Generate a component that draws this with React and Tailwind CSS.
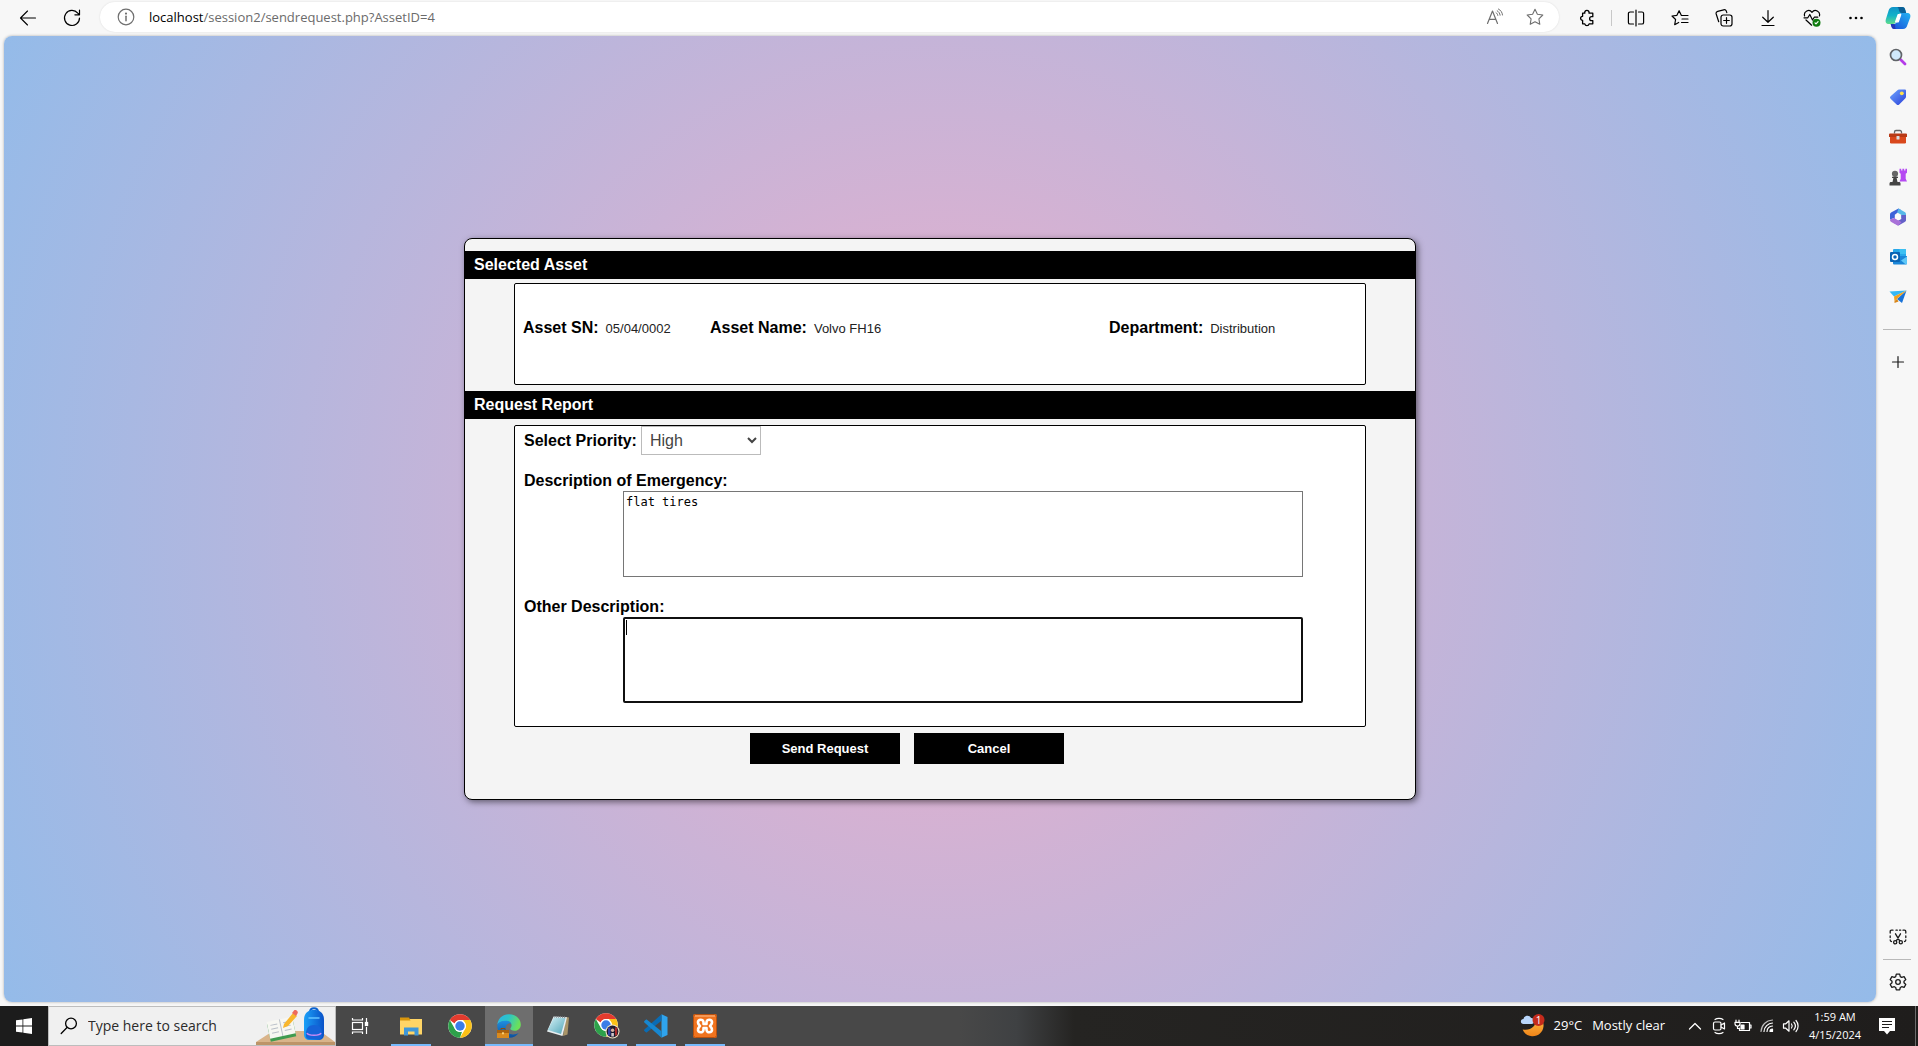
import React from "react";

const stroke = {
  fill: "none",
  stroke: "currentColor",
  strokeLinecap: "round",
  strokeLinejoin: "round",
};

/* ---------- Browser toolbar icons ---------- */

const BackIcon = () => (
  <svg width="18" height="18" viewBox="0 0 18 18" {...stroke} strokeWidth="1.1">
    <path d="M16.5 9H1.800M8.500 2 1.500 9l7 7" />
  </svg>
);

const ReloadIcon = () => (
  <svg width="18" height="18" viewBox="0 0 18 18" {...stroke} strokeWidth="1.2">
    <path d="M16.500 9A7.500 7.500 0 1 1 14.800 4.200L16.300 5.800M16.500 1.200v4.600h-4.600" />
  </svg>
);

const InfoIcon = () => (
  <svg width="18" height="18" viewBox="0 0 18 18" {...stroke} strokeWidth="1.2">
    <circle cx="9" cy="9" r="7.8" />
    <path d="M9 8.200v4.600" strokeWidth="1.5" />
    <circle cx="9" cy="5.6" r="0.5" fill="currentColor" />
  </svg>
);

const ReadAloudIcon = () => (
  <svg width="18" height="18" viewBox="0 0 18 18" {...stroke} strokeWidth="1.2">
    <path d="M1.500 15.500 6.500 3l5 12.500M3.200 11.300h6.600" />
    <path d="M10 4.600c1 .7 1.600 1.600 1.800 2.800M11.200 2.800c1.700 1 2.600 2.400 2.900 4.400M12.400 1c2.500 1.300 3.800 3.300 4.100 6" strokeWidth="1" />
  </svg>
);

const StarIcon = () => (
  <svg width="18" height="18" viewBox="0 0 18 18" {...stroke} strokeWidth="1.1">
    <path d="m9 1.300 2.400 5 5.400.7-3.900 3.800.9 5.500L9 13.700l-4.800 2.600.9-5.500L1.200 7l5.400-.7z" />
  </svg>
);

const PuzzleIcon = () => (
  <svg width="18" height="18" viewBox="0 0 18 18" {...stroke} strokeWidth="1.3">
    <path d="M4.600 4.200h2.200a2.200 2.200 0 1 1 4.200 0h3.800v3.500h-1.200a1.900 1.900 0 1 0 0 3.900h1.200v3.200h-3.700a2.200 2.200 0 0 1-4.300 0H4.600v-3.500a2 2 0 1 1 0-4z" />
  </svg>
);

const SplitIcon = () => (
  <svg width="18" height="18" viewBox="0 0 18 18" {...stroke} strokeWidth="1.2">
    <path d="M6.500 3H3a1.600 1.600 0 0 0-1.600 1.600v8.800A1.600 1.600 0 0 0 3 15h3.500M11.500 3H15a1.600 1.600 0 0 1 1.600 1.600v8.800A1.600 1.600 0 0 1 15 15h-3.500M9 1v16" />
  </svg>
);

const FavoritesIcon = () => (
  <svg width="18" height="18" viewBox="0 0 18 18" {...stroke} strokeWidth="1.2">
    <path d="M17 6.500h-6.600L8.100 1.700 5.900 6.300 1 7l3.600 3.500-.9 5.200 4-2.200" />
    <path d="M11 10h6M10.500 13.500H17" />
  </svg>
);

const CollectionsIcon = () => (
  <svg width="18" height="18" viewBox="0 0 18 18" {...stroke} strokeWidth="1.2">
    <rect x="6" y="6" width="11" height="11" rx="2.2" />
    <path d="M11.500 8.700v5.600M8.700 11.500h5.600M3.700 12.700 1.200 5a2.200 2.200 0 0 1 1.500-2.700l6-1.500a2.200 2.200 0 0 1 2.600 1.300l.5 1.500" />
  </svg>
);

const DownloadIcon = () => (
  <svg width="18" height="18" viewBox="0 0 18 18" {...stroke} strokeWidth="1.2">
    <path d="M9 1.500v11.500M3.700 8.200 9 13.300l5.300-5.100M3 16.500h12" />
  </svg>
);

const HealthIcon = () => (
  <svg width="18" height="18" viewBox="0 0 18 18" {...stroke} strokeWidth="1.2">
    <path d="M1.600 7A4.200 4.200 0 0 1 9 3.300 4.200 4.200 0 0 1 16.400 7M1 8.800h3.800l2-3.300L9.500 11l1.800-2.800h3.500M3 11l5.600 5.200" />
    <circle cx="13.5" cy="13.7" r="4" fill="#0f7b0f" stroke="none" />
    <path d="m12 13.900 1 1 2.100-2.300" stroke="#fff" />
  </svg>
);

const MoreIcon = () => (
  <svg width="18" height="18" viewBox="0 0 18 18" fill="currentColor">
    <circle cx="3.5" cy="9" r="1.3" />
    <circle cx="9" cy="9" r="1.3" />
    <circle cx="14.5" cy="9" r="1.3" />
  </svg>
);

const CopilotIcon = () => (
  <svg width="26" height="24" viewBox="0 0 26 24">
    <defs>
      <linearGradient id="cpA" x1="0" y1="0" x2="0" y2="1">
        <stop offset="0" stopColor="#1093c8" />
        <stop offset=".5" stopColor="#12b2c8" />
        <stop offset="1" stopColor="#5fdc8c" />
      </linearGradient>
      <linearGradient id="cpB" x1="0" y1="1" x2="1" y2="0">
        <stop offset="0" stopColor="#1b49d8" />
        <stop offset="1" stopColor="#22b4f2" />
      </linearGradient>
    </defs>
    <path d="M8 1h9c2.200 0 2.800 1.200 3.300 3l.9 3H17c-2 0-3 .8-3.600 2.600L11.500 15c-.8 2.200-1.800 3-3.800 3H4C1 18 .1 16 .8 13.500l2.800-9C4.300 2.200 5.700 1 8 1z" fill="url(#cpA)" />
    <path d="M12 1h5c2.200 0 2.800 1.200 3.300 3l.9 3H17c-1.600 0-2.400-.8-2.800-2.200C13.600 2.300 13.300 1.300 12 1z" fill="#0a5f96" />
    <path d="M18 23H9.500c-2 0-2.700-1.200-3.200-3l-.6-2H8c2 0 3.200-.8 3.800-2.600L14.500 9c.6-1.500 1.500-2 3-2H22c3 0 3.900 2 3.200 4.500l-2.800 7.500C21.700 21.800 20.300 23 18 23z" fill="url(#cpB)" />
    <path d="M6.300 20 5.700 18H8c1.500 0 2.500.8 2.200 2.500-.2 1.500.3 2.300 1.300 2.500h-2c-2 0-2.700-1.200-3.200-3z" fill="#2136b8" />
    <path d="M13.200 8.500h2.600l-2.500 7.300h-2.700z" fill="#fff" stroke="#fff" strokeWidth="1.200" strokeLinejoin="round" />
  </svg>
);

/* ---------- Sidebar icons ---------- */

const SideSearch = () => (
  <svg width="18" height="18" viewBox="0 0 18 18" fill="none">
    <path d="m11 11 5 5" stroke="#b43be8" strokeWidth="2.8" strokeLinecap="round" />
    <circle cx="7" cy="7" r="5.5" fill="#cfe9fb" stroke="#606468" strokeWidth="1.7" />
  </svg>
);

const SideTag = () => (
  <svg width="18" height="18" viewBox="0 0 18 18">
    <defs>
      <linearGradient id="tag" x1="0" y1="0" x2="1" y2="1">
        <stop offset="0" stopColor="#6ea6ff" />
        <stop offset="1" stopColor="#2a3fd8" />
      </linearGradient>
    </defs>
    <path d="M10 1.500h6a1 1 0 0 1 1 1v6.300a2 2 0 0 1-.6 1.400l-6.200 6.200a1.800 1.800 0 0 1-2.600 0L1.600 10.800a1.800 1.800 0 0 1 0-2.600l6.800-6A2.400 2.400 0 0 1 10 1.500z" fill="url(#tag)" />
    <circle cx="12.8" cy="5.3" r="1.9" fill="#ffe04a" />
  </svg>
);

const SideToolbox = () => (
  <svg width="18" height="16" viewBox="0 0 18 16">
    <path d="M5.500 4.500V3A1.500 1.500 0 0 1 7 1.500h4A1.500 1.500 0 0 1 12.500 3v1.500" fill="none" stroke="#666" strokeWidth="1.3" />
    <rect x="1" y="7" width="16" height="7.5" rx="1.2" fill="#d9481c" />
    <path d="M1 4.500h16a1 1 0 0 1 1 1V8H0V5.500a1 1 0 0 1 1-1z" fill="#b93a16" />
    <rect x="7.5" y="7" width="3" height="3.5" rx=".6" fill="#d8dde2" />
  </svg>
);

const SideChess = () => (
  <svg width="18" height="18" viewBox="0 0 18 18">
    <path d="M10.500.8h1.700v1.600h1.200V.8h1.800v1.600h1.200V.8H18v4l-1.300 1v5L18 13.500h-7.500l1.200-2.700v-5l-1.200-1z" fill="#b54af2" />
    <circle cx="6" cy="5.8" r="3.1" fill="#666" />
    <path d="M3 8.700h6v1.300H7.600l.9 4H10c1 0 1.500.7 1.500 1.700V17.500H.5v-1.800C.5 14.700 1 14 2 14h1.500l.9-4H3z" fill="#444" />
  </svg>
);

const SideOffice = () => (
  <svg width="18" height="18" viewBox="0 0 18 18">
    <path d="M9.500.5 2.500 4.300C1.400 5 1 5.600 1 7v4.500l4.800-1.700V6.800L12 2z" fill="#3d62d8" />
    <path d="M9.500.5 15.700 4C16.700 4.600 17 5.200 17 6.500v6L12.300 10V6.700L8.200 4.500z" fill="#58b8e8" />
    <path d="M17 7v5c0 1-.4 1.500-1.300 2L9.500 17.500 5 15l7.300-4V7z" fill="#6460c8" />
    <path d="M1 11.500c0 1.300.3 1.800 1.300 2.400L9 17.700l3.500-3.500L5.800 9.700z" fill="#a871d8" />
    <path d="m9 5.900 3 1.700v3L9 12.300l-3-1.700v-3z" fill="#fafafa" />
  </svg>
);

const SideOutlook = () => (
  <svg width="18" height="18" viewBox="0 0 18 18">
    <rect x="4" y="1" width="13" height="8" rx="1" fill="#28a8ea" />
    <path d="M10.500 1H16a1 1 0 0 1 1 1v4h-6.500z" fill="#3cc0f2" />
    <path d="M4 8h14v7.500a1 1 0 0 1-1 1H5a1 1 0 0 1-1-1z" fill="#1a86d8" />
    <path d="m18 8.500-6 4 4.800 4c.8 0 1.200-.5 1.200-1.200z" fill="#5fc8f8" />
    <rect x="1" y="4" width="10" height="10" rx="1" fill="#0a64b4" />
    <circle cx="6" cy="9" r="2.5" fill="none" stroke="#fff" strokeWidth="1.5" />
  </svg>
);

const SideSend = () => (
  <svg width="18" height="16" viewBox="0 0 18 16">
    <path d="M.5 2.500 17.500 1.500 5 7.500z" fill="#35b8f5" />
    <path d="M17.500 1.500 13 14 8 10z" fill="#1a73d8" />
    <path d="M17.500 1.500 5 7.500 5.500 12z" fill="#f2a11c" />
    <path d="M5.500 12 8 10l1.500 2.500-4 1.500z" fill="#d8861a" />
  </svg>
);

const PlusIcon = () => (
  <svg width="14" height="14" viewBox="0 0 14 14" {...stroke} strokeWidth="1.2">
    <path d="M7 1.500v11M1.500 7h11" />
  </svg>
);

const ScreenshotIcon = () => (
  <svg width="18" height="16" viewBox="0 0 18 16" {...stroke} strokeWidth="1.3">
    <path d="M1.200 4V2.500c0-.8.500-1.300 1.300-1.300H4M7 1.200h1.300M10.500 1.200h1.200M14 1.200h1.500c.8 0 1.300.5 1.300 1.300V4M16.800 7v1.500M1.200 7v1.500M1.200 11c0 1 .5 1.500 1.300 1.500M16.800 11c0 1-.5 1.500-1.300 1.500" />
    <path d="m6.500 4.800 4.200 7M11.500 4.800l-4.200 7" />
    <circle cx="6.2" cy="13.3" r="1.6" />
    <circle cx="11.8" cy="13.3" r="1.6" />
  </svg>
);

const GearIcon = () => (
  <svg width="18" height="18" viewBox="0 0 18 18" {...stroke} strokeWidth="1.3">
    <path d="M7.300 1.200h3.400l.6 2.400 1.400.8 2.400-.7 1.700 2.900-1.800 1.700v1.500l1.800 1.700-1.700 2.900-2.400-.7-1.400.8-.6 2.400H7.300l-.6-2.400-1.400-.8-2.400.7-1.700-2.900L3 9.800V8.300L1.200 6.600l1.700-2.900 2.400.7 1.400-.8z" />
    <circle cx="9" cy="9" r="2.3" />
  </svg>
);

/* ---------- Taskbar icons ---------- */

const WindowsIcon = () => (
  <svg width="16" height="16" viewBox="0 0 16 16" fill="#fff">
    <path d="M0 2.300 6.500 1.400v6.200H0zM7.300 1.300 16 0v7.600H7.300zM0 8.400h6.500v6.200L0 13.700zM7.300 8.400H16V16l-8.700-1.300z" />
  </svg>
);

const TaskSearchIcon = () => (
  <svg width="18" height="18" viewBox="0 0 18 18" {...stroke} strokeWidth="1.3">
    <circle cx="11" cy="6.5" r="5.4" />
    <path d="M7 10.500 1.200 16.500" />
  </svg>
);

const SchoolArt = () => (
  <svg width="79" height="38" viewBox="0 0 79 38">
    <defs>
      <linearGradient id="bag" x1="0" y1="0" x2="1" y2="0">
        <stop offset="0" stopColor="#1aa0f8" />
        <stop offset="1" stopColor="#0a52c8" />
      </linearGradient>
    </defs>
    <path d="M17 24h47l15 11v3H0v-3z" fill="#d9b48a" />
    <path d="M0 35h79v3H0z" fill="#bd9468" />
    <g transform="rotate(-12 26 20)">
      <path d="M12 14h26v18H12z" fill="#3f9b4f" />
      <path d="M12 12h26v17H12z" fill="#f7f7f2" />
      <path d="M25 12v17M15 16h7M15 20h7M15 24h7M28 16h7M28 20h7M28 24h7" stroke="#b9bfc8" />
    </g>
    <path d="m28 17 9-11 4 3-9 10-5 2z" fill="#f8b62d" />
    <path d="m36 6 2-2.500c1.500-1.500 5 1 3.500 3L40 9z" fill="#ee6a5a" />
    <path d="M54 5c0-5 8-5 8 0" fill="none" stroke="#0a62d0" strokeWidth="2" />
    <path d="M48 13c0-7 4-10 10-10s10 3 10 10v14c0 4-2 6-6 6h-8c-4 0-6-2-6-6z" fill="url(#bag)" />
    <path d="M50 27c0-6 3-9 8-9s8 3 8 9v2c0 2-1 3-3 3H53c-2 0-3-1-3-3z" fill="#1563d8" />
    <path d="M51 26c1 3 13 3 14 0" fill="none" stroke="#c78af2" strokeWidth="1.5" />
    <path d="M53 11h10" stroke="#63c3ff" strokeWidth="1.5" strokeLinecap="round" />
  </svg>
);

const TaskViewIcon = () => (
  <svg width="18" height="18" viewBox="0 0 18 18" fill="none" stroke="#fff" strokeWidth="1.2">
    <rect x="1.5" y="5.5" width="10" height="7" />
    <path d="M1.500 1v2h10V1M1.500 17v-2h10v2M15.500 1v4M15.500 10v7" />
    <rect x="14.4" y="5.5" width="2.2" height="3" fill="#fff" />
  </svg>
);

const ExplorerIcon = () => (
  <svg width="24" height="24" viewBox="0 0 24 24">
    <path d="M1 5h22v15.500H1z" fill="#ffd566" />
    <path d="M1 3.500h9L11.500 6.500H1z" fill="#d8960c" />
    <path d="M5 13.500h14.500V21.500h-4v-4h-6.500v4H5z" fill="#3f97d8" />
  </svg>
);

const ChromeShape = () => (
  <>
    <circle cx="12" cy="12" r="11.8" fill="#fff" />
    <path d="M12 .2a11.800 11.800 0 0 1 10.200 5.900H12a5.900 5.900 0 0 0-5.400 3.500L1.800 6.100A11.800 11.800 0 0 1 12 .2z" fill="#e33b2e" />
    <path d="M22.200 6.100A11.800 11.800 0 0 1 12 23.800l5.100-8.900a5.900 5.900 0 0 0 0-5.900L15 6.100z" fill="#fbc116" />
    <path d="M1.800 6.100 6.900 15a5.900 5.900 0 0 0 7.200 2.600L12 23.800A11.800 11.800 0 0 1 1.800 6.100z" fill="#2da14a" />
    <circle cx="12" cy="12" r="5.9" fill="#fff" />
    <circle cx="12" cy="12" r="4.7" fill="#3b7de8" />
  </>
);

const ChromeIcon = () => (
  <svg width="24" height="24" viewBox="0 0 24 24">
    <ChromeShape />
  </svg>
);

const ChromeProfileIcon = () => (
  <svg width="26" height="26" viewBox="0 0 26 26">
    <ChromeShape />
    <circle cx="18.5" cy="18.5" r="7" fill="#f0e2c4" />
    <circle cx="18.5" cy="18.5" r="5.9" fill="#1d1b2c" />
    <path d="M14 14.500h2.500v8H14z" fill="#3442a8" />
    <path d="M21 14.500h2.200v8H21z" fill="#a82a2a" />
    <circle cx="18.6" cy="17.3" r="1.7" fill="#d6b0a0" />
    <path d="M17.300 20h2.600v3.500h-2.600z" fill="#cfc7cc" />
  </svg>
);

const EdgeIcon = () => (
  <svg width="24" height="24" viewBox="0 0 24 24">
    <defs>
      <linearGradient id="edA" x1="0" y1="0" x2="1" y2="0.3">
        <stop offset="0" stopColor="#2bb3ea" />
        <stop offset=".5" stopColor="#2cc5c8" />
        <stop offset="1" stopColor="#6be05a" />
      </linearGradient>
      <linearGradient id="edB" x1="0" y1="0" x2="0" y2="1">
        <stop offset="0" stopColor="#1f8fe0" />
        <stop offset="1" stopColor="#0c4f9e" />
      </linearGradient>
    </defs>
    <path d="M.3 10.500C1 4.500 5.500.2 12 .2c7 0 11.800 4.800 11.800 10.200 0 4-3 6.300-6.300 6.300-2.500 0-4.200-.8-4.200-1.900 0-.8 1.300-1.300 1.300-3.500 0-2.600-2.300-4.300-5.500-4.300-4 0-7.200 1.500-8.800 3.500z" fill="url(#edA)" />
    <path d="M.3 10.800C1.500 8.200 4.800 6.700 8.600 6.700c2.800 0 5.200 1.300 5.900 3.300-1-.8-2-.8-2.800-.6-2 .6-3 2.600-3 4.600 0 4 3.500 6.500 7.300 6.500 2.300 0 4.300-.8 5.800-1.700-1.800 3-5.400 5-9.800 5C5.500 23.800-.3 18.300.3 10.800z" fill="url(#edB)" />
    <path d="M0 17h12v7H0z" fill="#d98a1e" />
    <path d="M0 16h12v3H0z" fill="#a8610f" />
    <path d="M4 16v-1.500h4V16" fill="none" stroke="#8a4c0c" />
    <path d="M5.200 18.300h1.600v2H5.200z" fill="#ffe08a" />
  </svg>
);

const NotepadIcon = () => (
  <svg width="26" height="24" viewBox="0 0 26 24">
    <defs>
      <linearGradient id="np" x1="0" y1="0" x2="1" y2="1">
        <stop offset="0" stopColor="#d5f1f6" />
        <stop offset="1" stopColor="#4fa5b8" />
      </linearGradient>
    </defs>
    <path d="m21 3 3 .5-1.500 17L18 22z" fill="#a89468" />
    <path d="M8.500 2.500 22 3.200 17.500 22 2 17.500z" fill="#e8eef0" />
    <path d="M9 3.500 20.500 4 16 20 2.800 16z" fill="url(#np)" />
    <path d="M9 2.800 21 3.300" stroke="#8b9499" strokeWidth="1.5" strokeDasharray="1 1" />
  </svg>
);

const VsCodeIcon = () => (
  <svg width="24" height="24" viewBox="0 0 24 24">
    <path d="M17.500.300 23.500 3v18l-6 2.700z" fill="#2fa4ee" />
    <path d="M17.500.300v6.500L3 18.300c-.4.3-.8.300-1.200 0L.400 17c-.5-.5-.5-1 0-1.500z" fill="#0a6cb4" />
    <path d="M17.500 23.700v-6.500L3 5.700c-.4-.3-.8-.3-1.200 0L.400 7c-.5.500-.5 1 0 1.500z" fill="#1787d0" />
  </svg>
);

const XamppIcon = () => (
  <svg width="24" height="24" viewBox="0 0 24 24">
    <rect width="24" height="24" rx="2" fill="#f0731e" />
    <rect x=".5" y=".5" width="23" height="23" rx="2" fill="none" stroke="#b8500e" />
    <path d="M2 2h20" stroke="#f9a468" strokeWidth="1.5" />
    <path
      d="M10.500 8.500C10.500 4.500 4.500 5 5 8.500c.2 2 1.500 2.500 2 3.500-.5 1-1.800 1.500-2 3.500-.5 3.500 5.500 4 5.500 0V14h3v1.500c0 4 6 3.500 5.500 0-.2-2-1.500-2.500-2-3.500.5-1 1.800-1.500 2-3.500.5-3.500-5.500-4-5.500 0V10h-3z"
      fill="none"
      stroke="#fff"
      strokeWidth="2.6"
      strokeLinejoin="round"
    />
  </svg>
);

const WeatherIcon = () => (
  <svg width="26" height="26" viewBox="0 0 26 26">
    <defs>
      <linearGradient id="moon" x1="0" y1="0" x2="0" y2="1">
        <stop offset="0" stopColor="#ffc04a" />
        <stop offset="1" stopColor="#f08418" />
      </linearGradient>
    </defs>
    <path d="M16 3c5 1 8 5 7.500 10.500-.6 6-5.500 10-11.500 9.700-4.500-.3-8-3-9.300-6.700C11 18.500 18 12 16 3z" fill="url(#moon)" />
    <path d="M3.500 11C0 11 0 6 3.500 6 4 2.500 9.500 1.500 11 5c3.500-.5 4.500 6 .5 6z" fill="#b9d6fb" />
    <circle cx="18.5" cy="7" r="6" fill="#c42b1c" />
    <text x="18.5" y="10.5" fontSize="10" textAnchor="middle" fill="#fff" fontFamily="Open Sans, sans-serif">1</text>
  </svg>
);

const ChevronUp = () => (
  <svg width="14" height="14" viewBox="0 0 14 14" {...stroke} strokeWidth="1.3">
    <path d="m1.500 10 5.500-5.500L12.500 10" />
  </svg>
);

const MeetIcon = () => (
  <svg width="14" height="18" viewBox="0 0 14 18" {...stroke} strokeWidth="1.2">
    <rect x="1.5" y="5" width="7.5" height="8" rx="1.5" />
    <path d="m9 8 3.500-2v6L9 10M3 2.500c2-1.500 6-1.500 8 0M3 15.500c2 1.500 6 1.500 8 0" />
  </svg>
);

const BatteryIcon = () => (
  <svg width="18" height="14" viewBox="0 0 18 14" {...stroke} strokeWidth="1.2">
    <path d="M7 3.500h8.500v8H5.500V9M15.500 6h1.500v3h-1.500" />
    <path d="M7 6h3v4H7z" fill="currentColor" />
    <path d="M2 1v2M5 1v2M1 3.300h5v1.500c0 1.400-1 2.200-2.500 2.200S1 6.200 1 4.800zM3.500 7v2.500H5.500" />
  </svg>
);

const WifiIcon = () => (
  <svg width="16" height="16" viewBox="0 0 16 16" {...stroke} strokeWidth="1.2">
    <path d="M2 13.500C2.500 7 7 2.500 13.500 2" opacity=".7" />
    <path d="M5 13.500c.3-4.500 4-8.200 8.500-8.500M8 13.500C8.200 10.500 10.500 8.200 13.500 8" />
    <path d="M11 13.500c0-1.500 1-2.500 2.500-2.500v2.500z" fill="currentColor" />
  </svg>
);

const VolumeIcon = () => (
  <svg width="18" height="16" viewBox="0 0 18 16" {...stroke} strokeWidth="1.2">
    <path d="M1.500 5.800h2.300L7 2.800v10.400l-3.200-3H1.500zM9.500 6c.9 1.200.9 2.800 0 4M11.800 4.200c1.900 2.200 1.900 5.400 0 7.600M14 2.500c2.800 3.200 2.800 7.800 0 11" />
  </svg>
);

const NotificationIcon = () => (
  <svg width="16" height="17" viewBox="0 0 16 17">
    <path d="M0 0h16v13h-5l-3 3.500L5 13H0z" fill="#fff" />
    <path d="M3 3.500h10M3 6.500h10M3 9.500h7" stroke="#1f1d1c" strokeWidth="1.2" />
  </svg>
);

/* ---------- Building blocks ---------- */

function ToolButton({ label, children }) {
  return (
    <button type="button" aria-label={label} className="flex h-8 w-11 shrink-0 items-center justify-center text-black">
      {children}
    </button>
  );
}

function SideButton({ label, children }) {
  return (
    <button type="button" aria-label={label} className="flex h-10 w-full items-center justify-center pl-0.5 text-[#1b1b1b]">
      {children}
    </button>
  );
}

function TaskButton({ label, running, active, children }) {
  return (
    <button
      type="button"
      aria-label={label}
      className={`flex h-10 w-12 shrink-0 flex-col items-center ${active ? "bg-[#6e6e6e]" : ""}`}
    >
      <span className="flex flex-1 items-center">{children}</span>
      {active && <span className="-mt-0.5 h-0.5 w-full bg-[#76b9fb]" />}
      {running && <span className="-mt-0.5 h-0.5 w-10 bg-[#76b9fb]" />}
    </button>
  );
}

function TrayButton({ label, children }) {
  return (
    <button type="button" aria-label={label} className="flex h-10 w-6 items-center justify-center">
      {children}
    </button>
  );
}

function SectionBar({ children }) {
  return <h2 className="bg-black pl-[9px] text-base leading-7 font-bold text-white">{children}</h2>;
}

function Field({ label, value }) {
  return (
    <div className="flex items-baseline gap-[7px]">
      <dt className="font-bold">{label}</dt>
      <dd className="text-[13px] text-[#222]">{value}</dd>
    </div>
  );
}

function BrowserToolbar() {
  return (
    <header className="flex h-9 items-start bg-[#f7f7f7] pt-0.5 pl-1.5">
      <ToolButton label="Back"><BackIcon /></ToolButton>
      <ToolButton label="Refresh"><ReloadIcon /></ToolButton>
      <div className="ml-1.5 flex h-[30px] min-w-0 flex-1 items-center rounded-full bg-white pr-1 pl-[17px] text-[#6f6f6f] shadow-[0_0_2px_rgba(0,0,0,0.12)]">
        <InfoIcon />
        <a
          href="#address"
          className="ml-3.5 flex-1 truncate font-['Open_Sans','Noto_Sans',sans-serif] text-[13px] leading-5 text-[#6b6b6b]"
        >
          <span className="text-black">localhost</span>/session2/sendrequest.php?AssetID=4
        </a>
        <button type="button" aria-label="Read aloud" className="flex h-8 w-10 items-center justify-center"><ReadAloudIcon /></button>
        <button type="button" aria-label="Add to favorites" className="flex h-8 w-10 items-center justify-center"><StarIcon /></button>
      </div>
      <div className="ml-1.5 flex items-center">
        <ToolButton label="Extensions"><PuzzleIcon /></ToolButton>
        <span className="mx-0.5 h-4 w-px bg-[#c8c8c8]" />
        <ToolButton label="Split screen"><SplitIcon /></ToolButton>
        <ToolButton label="Favorites"><FavoritesIcon /></ToolButton>
        <ToolButton label="Collections"><CollectionsIcon /></ToolButton>
        <ToolButton label="Downloads"><DownloadIcon /></ToolButton>
        <ToolButton label="Browser essentials"><HealthIcon /></ToolButton>
        <ToolButton label="Settings and more"><MoreIcon /></ToolButton>
        <button type="button" aria-label="Copilot" className="flex h-8 w-10 items-center justify-center"><CopilotIcon /></button>
      </div>
    </header>
  );
}

function Sidebar() {
  return (
    <aside className="flex w-[42px] shrink-0 flex-col items-center pt-px">
      <SideButton label="Search"><SideSearch /></SideButton>
      <SideButton label="Shopping"><SideTag /></SideButton>
      <SideButton label="Tools"><SideToolbox /></SideButton>
      <SideButton label="Games"><SideChess /></SideButton>
      <SideButton label="Microsoft 365"><SideOffice /></SideButton>
      <SideButton label="Outlook"><SideOutlook /></SideButton>
      <SideButton label="Drop"><SideSend /></SideButton>
      <span className="mt-3 h-px w-7 bg-[#b9b9b9]" />
      <div className="mt-3 w-full"><SideButton label="Customize"><PlusIcon /></SideButton></div>
      <div className="mt-auto w-full"><SideButton label="Screenshot"><ScreenshotIcon /></SideButton></div>
      <span className="mt-0.5 h-px w-7 bg-[#b9b9b9]" />
      <div className="mt-0.5 w-full"><SideButton label="Settings"><GearIcon /></SideButton></div>
    </aside>
  );
}

function RequestForm() {
  return (
    <form
      onSubmit={(e) => e.preventDefault()}
      className="w-full max-w-[952px] rounded-lg border border-black bg-[#f4f4f4] pt-3 pb-[35px] font-['Liberation_Sans',Arial,sans-serif] text-base leading-5 text-black shadow-[2px_2px_6px_rgba(0,0,0,0.5)]"
    >
      <SectionBar>Selected Asset</SectionBar>
      <dl className="mx-[49px] mt-1 grid h-[102px] grid-cols-[187fr_399fr_248fr] rounded-xs border border-black bg-white px-2 pt-[34px]">
        <Field label="Asset SN:" value="05/04/0002" />
        <Field label="Asset Name:" value="Volvo FH16" />
        <Field label="Department:" value="Distribution" />
      </dl>

      <div className="mt-1.5"><SectionBar>Request Report</SectionBar></div>
      <div className="mx-[49px] mt-1.5 rounded-xs border border-black bg-white pb-[23px]">
        <div className="flex items-center gap-1 pl-[9px]">
          <label htmlFor="priority" className="font-bold">Select Priority:</label>
          <select
            id="priority"
            defaultValue="High"
            className="h-[29px] w-30 border border-[#bbb] bg-white pl-1 text-base text-[#444]"
          >
            <option>High</option>
            <option>Medium</option>
            <option>Low</option>
          </select>
        </div>

        <label htmlFor="emergency" className="mt-4 block w-fit pl-[9px] font-bold">Description of Emergency:</label>
        <textarea
          id="emergency"
          defaultValue="flat tires"
          className="ml-27 block h-[86px] w-4/5 resize-none border border-[#767676] bg-white px-0.5 py-0.5 font-['DejaVu_Sans_Mono',monospace] text-xs leading-4"
        />

        <label htmlFor="other" className="mt-5 block w-fit pl-[9px] font-bold">Other Description:</label>
        <div className="relative ml-27 w-4/5">
          <textarea
            id="other"
            className="block h-[86px] w-full resize-none rounded-xs border-2 border-[#101010] bg-white p-px font-['DejaVu_Sans_Mono',monospace] text-xs leading-4 caret-transparent outline-none"
          />
          <span aria-hidden="true" className="absolute top-[3px] left-[3px] h-[15px] w-px bg-black" />
        </div>
      </div>

      <div className="mt-1.5 flex justify-center gap-3.5 pr-[66px]">
        <button type="submit" className="h-[31px] w-[150px] bg-black text-[13px] font-bold text-white">Send Request</button>
        <button type="button" className="h-[31px] w-[150px] bg-black text-[13px] font-bold text-white">Cancel</button>
      </div>
    </form>
  );
}

function Taskbar() {
  return (
    <footer className="flex h-10 items-center bg-[linear-gradient(90deg,#1c1c1c_0%,#1c1c1c_3%,#484848_12%,#484848_50%,#3f4143_53%,#252422_56%,#1f1d1c_100%)] font-['Open_Sans','Noto_Sans',sans-serif] text-white">
      <button type="button" aria-label="Start" className="flex h-10 w-12 shrink-0 items-center justify-center bg-[#1c1c1c]"><WindowsIcon /></button>
      <div className="flex h-10 w-72 shrink-0 items-center border border-[#bdbdbd] bg-[#f0f0f0] pl-[11px] text-black">
        <TaskSearchIcon />
        <input
          type="text"
          aria-label="Type here to search"
          placeholder="Type here to search"
          className="ml-2.5 min-w-0 flex-1 bg-transparent text-sm outline-none placeholder:text-[#2b2b2b]"
        />
        <span className="shrink-0 self-end"><SchoolArt /></span>
      </div>
      <TaskButton label="Task View"><TaskViewIcon /></TaskButton>
      <div className="ml-[3px] flex gap-px">
        <TaskButton label="File Explorer" running><ExplorerIcon /></TaskButton>
        <TaskButton label="Chrome"><ChromeIcon /></TaskButton>
        <TaskButton label="Edge" active><EdgeIcon /></TaskButton>
        <TaskButton label="Notepad"><NotepadIcon /></TaskButton>
        <TaskButton label="Chrome profile" running><ChromeProfileIcon /></TaskButton>
        <TaskButton label="Visual Studio Code" running><VsCodeIcon /></TaskButton>
        <TaskButton label="XAMPP" running><XamppIcon /></TaskButton>
      </div>
      <div className="ml-auto flex h-10 items-center">
        <button type="button" className="flex items-center text-[13px]">
          <WeatherIcon />
          <span className="ml-2">29°C</span>
          <span className="ml-2.5">Mostly clear</span>
        </button>
        <div className="ml-[18px] flex items-center">
          <TrayButton label="Show hidden icons"><ChevronUp /></TrayButton>
          <TrayButton label="Meet now"><MeetIcon /></TrayButton>
          <TrayButton label="Battery"><BatteryIcon /></TrayButton>
          <TrayButton label="Network"><WifiIcon /></TrayButton>
          <TrayButton label="Volume"><VolumeIcon /></TrayButton>
        </div>
        <button type="button" className="ml-1 w-14 text-center text-[11px] leading-[18px] whitespace-nowrap">
          <span className="block">1:59 AM</span>
          <span className="block">4/15/2024</span>
        </button>
        <button type="button" aria-label="Notifications" className="ml-4"><NotificationIcon /></button>
        <button type="button" aria-label="Show desktop" className="ml-5 h-10 w-[3px] border-l border-[#6b6b6b]" />
      </div>
    </footer>
  );
}

export default function App() {
  return (
    <div className="flex min-h-screen flex-col bg-[#f7f7f7]">
      <BrowserToolbar />
      <div className="flex flex-1 pb-1 pl-1">
        <main className="flex flex-1 items-center justify-center rounded-lg bg-[radial-gradient(circle,rgb(238,174,202)_0%,rgb(148,187,233)_100%)] shadow-[0_0_3px_rgba(0,0,0,0.3)]">
          <RequestForm />
        </main>
        <Sidebar />
      </div>
      <Taskbar />
    </div>
  );
}
